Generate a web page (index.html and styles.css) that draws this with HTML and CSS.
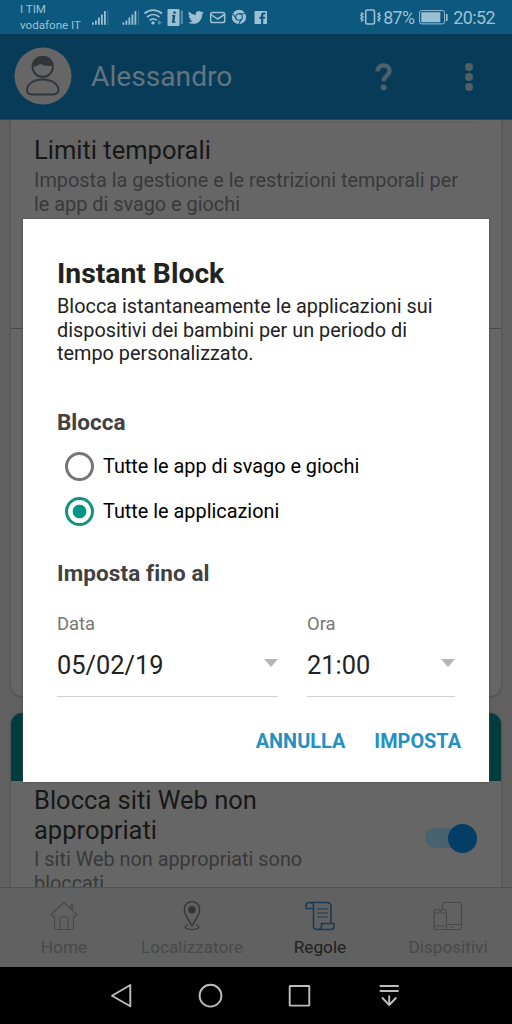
FILE: index.html
```html
<!DOCTYPE html>
<html lang="it">
<head>
<meta charset="utf-8">
<title>Regole</title>
<link rel="stylesheet" href="styles.css">
</head>
<body>
<div class="screen">
  <div class="status">
    <div class="carrier"><span>I TIM</span><span>vodafone IT</span></div>
    <svg class="status-icons" width="180" height="34" viewBox="90 0 180 34" fill="#9cc0d3">
      <g id="sig"><path d="M92 22.500h1.800v2.300h-1.800zM95 20.500h1.800v4.300H95zM98 17.500h1.800v7.300H98zM101 14.500h1.800v10.300H101zM104 11h1.800v13.800H104z"/><path d="M107.400 10h1v15h-1z" opacity=".35"/></g>
      <use href="#sig" x="30.500"/>
      <g fill="none" stroke="#9cc0d3" stroke-width="1.800"><path d="M144.500 13.500c5.200-4.600 12.200-4.600 17.500 0M147 17c3.800-3.300 8.600-3.300 12.400 0M149.700 20.300c2.200-1.800 4.800-1.800 7 0"/></g>
      <circle cx="153" cy="22.900" r="1.700"/><path d="M158 20l4 2.500-4 2.500z" fill="#4690bd"/>
      <rect x="167.500" y="9" width="12" height="17" rx="1"/><path d="M180.800 10.500h2v13.500h-2z" opacity=".55"/>
      <path d="M173.300 11.500h2.400v2.200h-2.400zM172 15h3.400l-1 6.200h1v1.600h-3.600l1-6.200H172z" fill="#0d587e"/>
      <path transform="translate(188 9.500) scale(.66)" d="M23.950 4.570a10 10 0 0 1-2.820.77 4.960 4.960 0 0 0 2.160-2.720c-.95.550-2 .960-3.130 1.180a4.920 4.920 0 0 0-8.380 4.480C7.690 8.090 4.070 6.130 1.640 3.160a4.930 4.930 0 0 0 1.520 6.570 4.900 4.900 0 0 1-2.230-.61v.06a4.920 4.920 0 0 0 3.950 4.830 5 5 0 0 1-2.210.08 4.940 4.940 0 0 0 4.600 3.420A9.870 9.870 0 0 1 0 19.540a14 14 0 0 0 7.550 2.210c9.050 0 14-7.500 14-13.980 0-.21 0-.42-.02-.63a9.940 9.940 0 0 0 2.420-2.570z"/>
      <g fill="none" stroke="#9cc0d3" stroke-width="1.500"><rect x="210.700" y="12.500" width="14" height="10" rx="1.800"/><path d="M211 14.500l6.700 4.500 6.800-4.500"/></g>
      <circle cx="239" cy="17" r="7.200"/><g fill="none" stroke="#0d587e" stroke-width="1.100"><circle cx="239" cy="17" r="3.300"/><path d="M239 13.700h6.300M236.200 18.700l-3.500-5M241.800 18.700l-3.100 5.200"/></g>
      <rect x="254.500" y="11" width="12.500" height="13" rx=".8"/><path d="M261 24v-5.300h-1.700v-2H261v-1.400c0-1.900 1-2.900 2.700-2.900h1.700v2h-1.200c-.8 0-1 .4-1 1v1.300h2.100l-.3 2h-1.800V24z" fill="#0d587e"/>
    </svg>
    <div class="status-right">
      <svg width="22" height="18" viewBox="360 8 22 18" fill="none" stroke="#9cc0d3" stroke-width="1.600"><rect x="365.700" y="10" width="8.800" height="14" rx="1.500"/><path d="M361 12.500l1.800 1.500-1.800 1.500 1.800 1.500-1.800 1.500 1.800 1.500-1.800 1.500M380 12.500l-1.800 1.500 1.800 1.500-1.800 1.500 1.800 1.500-1.800 1.500 1.800 1.500"/></svg>
      <span class="percent">87%</span>
      <svg class="battery" width="29" height="15" viewBox="0 0 29 15"><rect x=".6" y=".6" width="25" height="13.300" rx="2" fill="none" stroke="#9cc0d3" stroke-width="1"/><path d="M2.300 2.300h19v10H2.300zM27 4h1.600v7H27z" fill="#9cc0d3"/></svg>
      <span class="clock">20:52</span>
    </div>
  </div>

  <div class="header">
    <svg class="avatar" width="58" height="58" viewBox="0 0 58 58"><circle cx="29" cy="29" r="28.500" fill="#666"/><g fill="none" stroke="#323539" stroke-width="1.900"><circle cx="28.700" cy="19.800" r="10.200"/><path d="M28.700 32.500c9 0 15.700 4.500 15.700 10.500 0 3.200-2.500 4.500-5.500 4.500H18.500c-3 0-5.500-1.300-5.500-4.500 0-6 6.700-10.500 15.700-10.500z"/></g><path d="M18.300 19.500C18 13 23 9 28.700 9c6 0 10.500 4.500 10.500 9.500-5 1-10 .3-13.200-1.800-1.500 2-4.500 3-7.700 2.800z" fill="#323539"/></svg>
    <h1>Alessandro</h1>
    <svg class="help" width="20" height="30" viewBox="0 0 20 30"><path d="M3.500 9.500C3.500 1.500 15.600 1.700 15.600 8.700c0 5-6 5-6 10.600" fill="none" stroke="#4f6069" stroke-width="4.400"/><circle cx="9.600" cy="25.600" r="3" fill="#4f6069"/></svg>
    <svg class="more" width="10" height="30" viewBox="0 0 10 30" fill="#4f6069"><circle cx="5" cy="5" r="4"/><circle cx="5" cy="15" r="4"/><circle cx="5" cy="25" r="4"/></svg>
  </div>

  <div class="content">
    <div class="card limits">
      <div class="limits-row">
        <h2>Limiti temporali</h2>
        <p>Imposta la gestione e le restrizioni temporali per le app di svago e giochi</p>
      </div>
    </div>
    <div class="card web">
      <div class="web-banner"></div>
      <div class="web-row">
        <div class="web-text">
          <h2>Blocca siti Web non appropriati</h2>
          <p>I siti Web non appropriati sono bloccati</p>
        </div>
        <div class="switch"><div class="knob"></div></div>
      </div>
    </div>
  </div>

  <div class="tabs">
    <div class="tab"><svg width="32" height="32" viewBox="0 0 32 32" fill="none" stroke="#494949" stroke-width="1.200" stroke-linejoin="round"><path d="M6.500 16v12c0 1 .5 1.500 1.500 1.500h16c1 0 1.500-.5 1.500-1.500V16M6.500 16H4c-1 0-1.300-1-.5-1.700L16 2.500l12.500 11.800c.8.700.5 1.700-.5 1.700h-2.500M23 9V4.500h1.500v6M12 29.500V19c0-1.500 1-2.500 2.500-2.500h3c1.500 0 2.500 1 2.500 2.500v10.500"/></svg><span>Home</span></div>
    <div class="tab"><svg width="32" height="32" viewBox="0 0 32 32" fill="none" stroke="#353535" stroke-width="1.400"><path d="M16 26c-2.500-5-7.700-11-7.700-16.700a7.700 7.700 0 0 1 15.400 0C23.700 15 18.500 21 16 26z"/><circle cx="16" cy="9.800" r="3.700" fill="#353535" stroke="none"/><path d="M12.500 24.500c-5.500 1.500-4 5 3.500 5s9-3.500 3.500-5" stroke-width="1.100"/></svg><span>Localizzatore</span></div>
    <div class="tab active"><svg width="32" height="32" viewBox="0 0 32 32" fill="none" stroke="#183c53" stroke-width="1.600" stroke-linejoin="round"><path d="M5.500 2.500H23c2.500 0 4 1.500 4 4V23M5.500 2.500C3 2.500 2 4 2 6v2.500h7.500V6c0-2-1.500-3.500-4-3.500zM9.500 8.500V26c0 2 1.500 3.500 4 3.500s4-1.500 4-3.500v-2.500H30V26c0 2-1.500 3.500-3.500 3.500h-13"/><path d="M13 9h11M13 13h11M13 17h11" stroke-width="1"/></svg><span>Regole</span></div>
    <div class="tab"><svg width="32" height="32" viewBox="0 0 32 32" fill="none" stroke="#494949" stroke-width="1.200"><path d="M10.500 9.500v-5c0-1.300.7-2 2-2h15c1.300 0 2 .7 2 2v23c0 1.300-.7 2-2 2H4c-1.300 0-2-.7-2-2v-16c0-1.300.7-2 2-2h8.500c1.300 0 2 .7 2 2v18M14.500 24.500h15M2 13h12.500M2 26h12.500M7 11.300h3M19 27h3"/></svg><span>Dispositivi</span></div>
  </div>

  <div class="navbar">
    <svg width="512" height="57" viewBox="0 967 512 57" fill="none" stroke="#bdbdbd" stroke-width="1.900" stroke-linejoin="round"><path d="M130.300 985v21.300L112 995.700z"/><circle cx="210.500" cy="995.700" r="10.900"/><rect x="289.700" y="986" width="19.600" height="19.600" rx=".5"/><path d="M379.700 986h19M379.700 991h19M389.200 995.500v9.500M382 997.500l7.200 7.500 7.200-7.500"/></svg>
  </div>

  <div class="dialog">
    <h2>Instant Block</h2>
    <p class="intro">Blocca istantaneamente le applicazioni sui dispositivi dei bambini per un periodo di tempo personalizzato.</p>
    <h3>Blocca</h3>
    <div class="option"><span class="radio"></span><span class="option-label">Tutte le app di svago e giochi</span></div>
    <div class="option"><span class="radio checked"></span><span class="option-label">Tutte le applicazioni</span></div>
    <h3 class="until">Imposta fino al</h3>
    <div class="fields">
      <div class="field date"><label>Data</label><div class="value"><span>05/02/19</span><i class="arrow"></i></div></div>
      <div class="field time"><label>Ora</label><div class="value"><span>21:00</span><i class="arrow"></i></div></div>
    </div>
    <div class="actions"><span class="cancel">ANNULLA</span><span class="confirm">IMPOSTA</span></div>
  </div>
</div>
</body>
</html>
```
FILE: styles.css
```css
* { box-sizing: border-box; }
body { margin: 0; font-family: Roboto, "Liberation Sans", sans-serif; }
h1, h2, h3, p { margin: 0; font-weight: 400; }
svg { display: block; flex: none; }
.screen { position: relative; width: 512px; height: 1024px; overflow: hidden; background: #616161; display: flex; flex-direction: column; }
.status { height: 34px; flex: none; background: #0d587e; color: #9cc0d3; display: flex; }
.carrier { width: 90px; flex: none; padding: 2px 0 0 20px; display: flex; flex-direction: column; font-size: 11.600px; line-height: 15.500px; white-space: nowrap; }
.status-right { flex: 1; display: flex; align-items: center; justify-content: flex-end; padding-right: 17px; font-size: 17.800px; }
.percent { margin-left: 1px; letter-spacing: -.7px; }
.battery { margin: 0 5px; }
.clock { letter-spacing: -.5px; }
.header { height: 86px; flex: none; display: flex; align-items: center; background: #083b57; border-bottom: 1px solid #22485a; padding-left: 14px; }
.avatar { margin-top: -1px; }
.header h1 { margin-left: 19px; width: 283px; font-size: 28.200px; color: #617581; }
.more { margin-left: 70px; }
.content { height: 767px; flex: none; overflow: hidden; padding: 0 11px; }
.card { background: #666; box-shadow: 0 1px 3px #484848; }
.limits { height: 576px; border-radius: 0 0 11px 11px; }
.limits-row { height: 209px; padding: 15px 23px 0; border-bottom: 1px solid #494949; background: linear-gradient(#5d5d5d, #5d5d5d) 24px 2px / 443px 1px no-repeat; }
.card h2 { font-size: 25.500px; line-height: 30px; color: #171717; }
.card p { font-size: 19.850px; line-height: 23.500px; color: #393939; }
.limits p { width: 430px; margin-top: 4px; }
.web { height: 240px; margin-top: 17px; border-radius: 11px 11px 0 0; }
.web-banner { height: 68px; background: #003d3c; border-radius: 11px 11px 0 0; }
.web-row { display: flex; justify-content: space-between; padding: 4px 24px 0 23px; }
.web-text { width: 310px; }
.web p { margin-top: 3px; }
.switch { width: 52px; height: 20px; margin-top: 43px; border-radius: 10px; background: #496270; display: flex; justify-content: flex-end; align-items: center; }
.knob { width: 29px; height: 29px; border-radius: 50%; background: #043e66; flex: none; }
.tabs { height: 80px; flex: none; display: flex; border-top: 1px solid #505050; background: #616161; }
.tab { flex: 1; display: flex; flex-direction: column; align-items: center; padding-top: 12px; color: #494949; font-size: 17.200px; line-height: 22px; }
.tab span { margin-top: 4px; }
.active { color: #202020; }
.navbar { height: 57px; flex: none; background: #000; }
.dialog { position: absolute; left: 23px; top: 219px; width: 466px; height: 563px; background: #fff; padding: 38px 28px 0 34px; box-shadow: 0 0 2px #444; }
.dialog h2 { font-size: 28.300px; line-height: 34px; font-weight: 700; color: #222; }
.intro { width: 400px; margin-top: 4px; font-size: 19.850px; line-height: 23.500px; color: #222; }
.dialog h3 { margin-top: 42px; font-size: 22.500px; line-height: 28px; font-weight: 700; color: #414141; }
.option { display: flex; align-items: center; height: 45px; padding-left: 8px; font-size: 19.850px; color: #000; }
.dialog h3 + .option { margin-top: 8px; }
.radio { width: 29px; height: 29px; flex: none; border: 3px solid #757575; border-radius: 50%; margin-right: 9px; }
.checked { border-color: #159184; background: radial-gradient(circle, #009684 6.500px, #fff 7.200px); }
.dialog .until { margin-top: 25px; letter-spacing: .1px; }
.fields { display: flex; gap: 29px; margin-top: 26px; }
.date { width: 221px; }
.time { width: 148px; }
.field label { display: block; font-size: 18.400px; line-height: 22px; color: #777; }
.value { height: 62px; display: flex; align-items: center; justify-content: space-between; border-bottom: 1px solid #d2d2d2; font-size: 25.400px; color: #222; }
.arrow { border: 7px solid transparent; border-top: 8px solid #b5b5b5; border-bottom: 0; margin-bottom: 4px; }
.actions { display: flex; justify-content: flex-end; gap: 29px; margin-top: 32px; font-size: 19.900px; line-height: 26px; font-weight: 700; color: #2590c4; }
```
